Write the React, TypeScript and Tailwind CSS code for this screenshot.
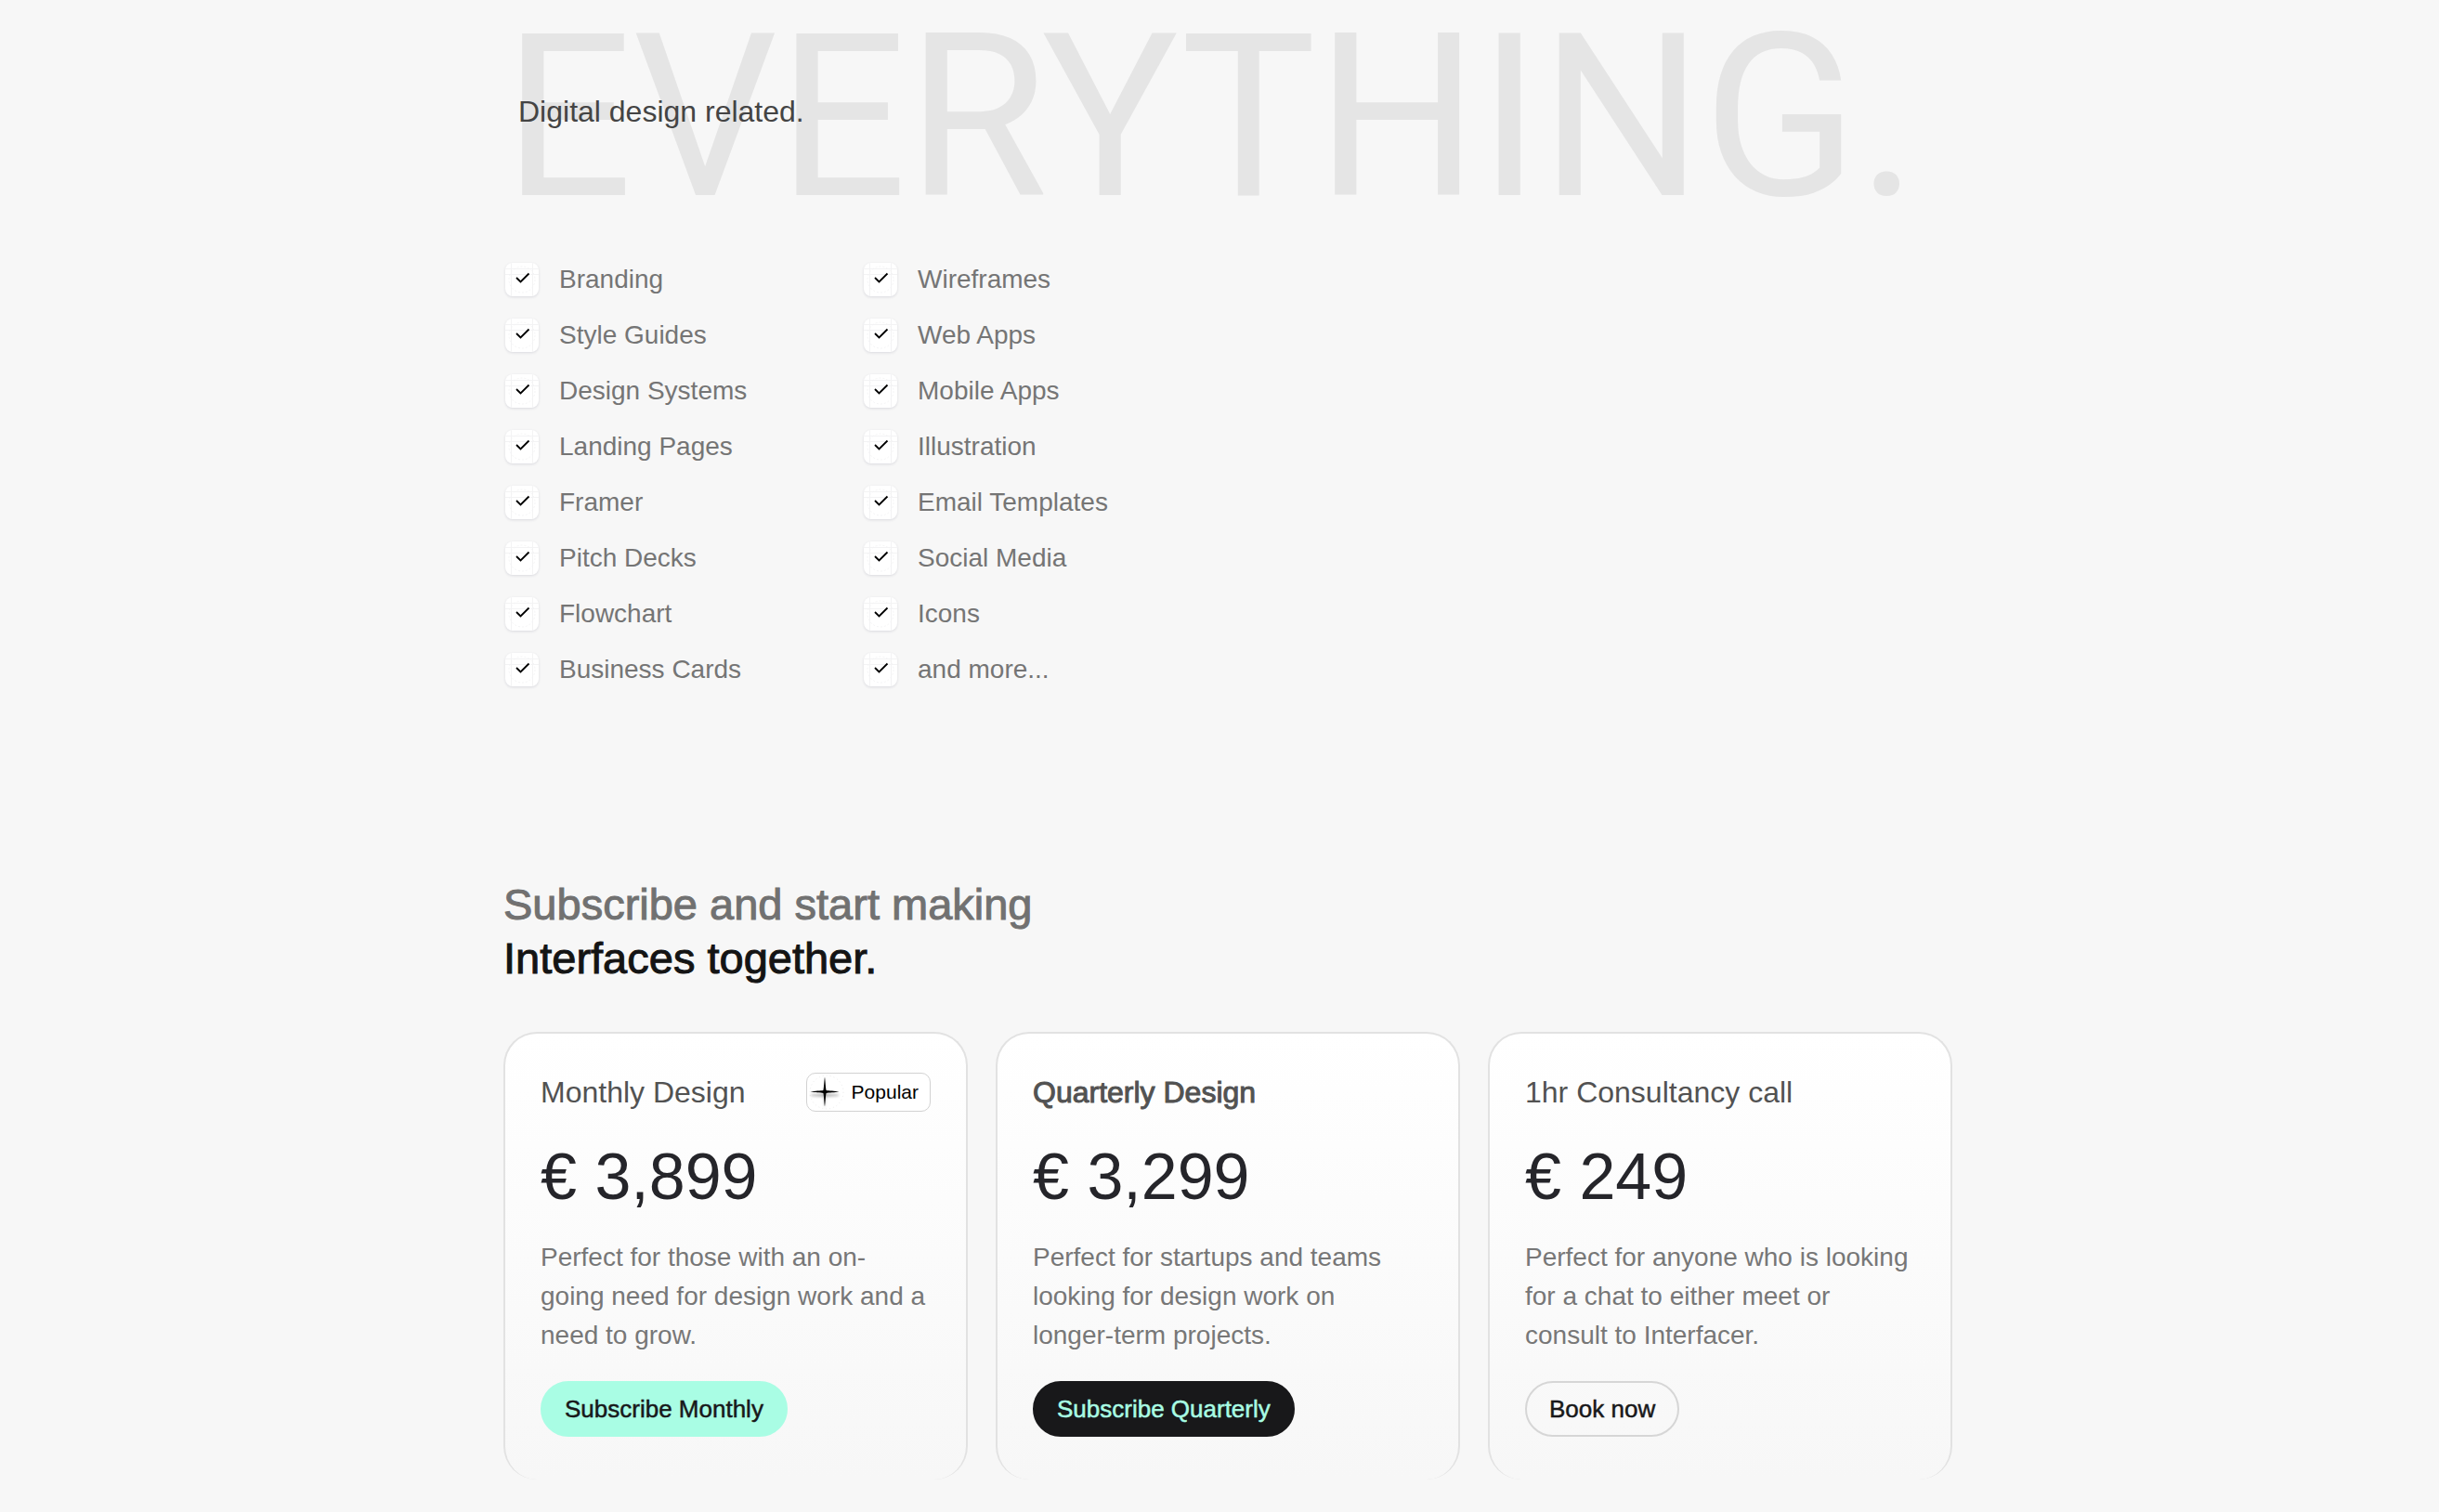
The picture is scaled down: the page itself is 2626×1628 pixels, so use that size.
const services = [
  "Branding",
  "Style Guides",
  "Design Systems",
  "Landing Pages",
  "Framer",
  "Pitch Decks",
  "Flowchart",
  "Business Cards",
  "Wireframes",
  "Web Apps",
  "Mobile Apps",
  "Illustration",
  "Email Templates",
  "Social Media",
  "Icons",
  "and more...",
];

const plans = [
  {
    name: "Monthly Design",
    nameClass: "",
    price: "€ 3,899",
    text: "Perfect for those with an on-\ngoing need for design work and a need to grow.",
    action: "Subscribe Monthly",
    actionClass: "border-[#a9fde4] bg-[#a9fde4] text-[#18181a]",
    popular: true,
  },
  {
    name: "Quarterly Design",
    nameClass: "[-webkit-text-stroke:1px]",
    price: "€ 3,299",
    text: "Perfect for startups and teams looking for design work on longer-term projects.",
    action: "Subscribe Quarterly",
    actionClass: "border-[#18181a] bg-[#18181a] text-[#a9fde4]",
    popular: false,
  },
  {
    name: "1hr Consultancy call",
    nameClass: "",
    price: "€ 249",
    text: "Perfect for anyone who is looking for a chat to either meet or consult to Interfacer.",
    action: "Book now",
    actionClass: "border-[#d6d6d6] bg-transparent text-[#18181a]",
    popular: false,
  },
];

function CheckTile() {
  return (
    <svg
      viewBox="0 0 36 36"
      className="size-9 shrink-0 rounded-lg bg-white shadow-[0_1px_3px_rgba(40,40,80,0.14)]"
      fill="none"
      aria-hidden="true"
    >
      <g stroke="#f3f3f4">
        <path d="M6.5 0V36M29.5 0V36M0 6.5H36M0 12.5H36" />
        <circle cx="18" cy="18" r="14" strokeDasharray="2 2" />
      </g>
      <path d="M12 16L16.500 20.500L25.500 11.500" stroke="#000" strokeWidth="1.8" />
    </svg>
  );
}

function Spark() {
  return (
    <svg viewBox="0 0 40 40" className="size-10 shrink-0" aria-hidden="true">
      <defs>
        <filter id="spark-shadow" x="-20%" y="-20%" width="140%" height="160%">
          <feGaussianBlur stdDeviation="1.4" />
        </filter>
      </defs>
      <circle cx="21" cy="20" r="18" fill="none" stroke="#ececec" strokeDasharray="1 3" />
      <path
        d="M19 7L20 21.500L34 22.500L34 24L20 25L19 38L18 25L4 24L4 22.500L18 21.500Z"
        fill="#000"
        opacity="0.3"
        filter="url(#spark-shadow)"
      />
      <path
        d="M19 3.500C19.800 9 19.900 16 20.600 18.100C23 18.600 30 18.700 34.500 19.500C30 20.300 23 20.400 20.600 20.900C19.900 23 19.800 30 19 35.500C18.200 30 18.100 23 17.400 20.900C15 20.400 8 20.300 3.500 19.500C8 18.700 15 18.600 17.400 18.100C18.100 16 18.200 9 19 3.500Z"
        fill="#000"
      />
    </svg>
  );
}

export default function App() {
  return (
    <main className="min-h-screen bg-[#f7f7f7] pl-[18px] font-['Liberation_Sans',Arial,sans-serif]">
      <div className="mx-auto max-w-[1560px] pb-9">
        <section id="services">
          <div className="relative">
            <h1 className="whitespace-nowrap font-[Roboto,sans-serif] text-[245px] leading-[254px] text-[#e5e5e5]">
              EVERYTHING.
            </h1>
            <p className="absolute top-24 left-4 text-[32px] leading-12 text-[#444]">
              Digital design related.
            </p>
          </div>

          <ul className="mt-[17px] grid w-[772px] grid-flow-col grid-cols-2 grid-rows-8">
            {services.map((service) => (
              <li key={service} className="flex h-[60px] items-center gap-[22px] pl-0.5">
                <CheckTile />
                <span className="text-[28px] leading-[42px] text-[#757575]">{service}</span>
              </li>
            ))}
          </ul>
        </section>

        <section id="pricing" className="pt-[194px]">
          <h2 className="text-[47px] leading-[58px] text-[#141414] [-webkit-text-stroke:1px]">
            <span className="block text-[#717171]">Subscribe and start making</span>
            Interfaces together.
          </h2>

          <div className="mt-[50px] grid grid-cols-3 gap-[30px]">
            {plans.map((plan) => (
              <article
                key={plan.name}
                className="rounded-[36px] border-2 border-b-0 border-[#e2e2e2] bg-linear-to-b from-white to-[#f7f7f7] px-[38px] pt-[42px] pb-[46px]"
              >
                <div className="flex h-[42px] items-center justify-between">
                  <h3 className={`text-[32px] leading-[42px] text-[#525252] ${plan.nameClass}`}>
                    {plan.name}
                  </h3>
                  {plan.popular && (
                    <span className="flex h-[42px] items-center gap-2 rounded-[10px] border border-[#d2d2d2] bg-white pr-3 text-[21px] text-black">
                      <Spark />
                      Popular
                    </span>
                  )}
                </div>

                <p className="mt-[30px] text-[70px] leading-20 text-[#25252a]">{plan.price}</p>

                <p className="mt-[26px] whitespace-pre-line text-[28px] leading-[42px] text-[#777]">
                  {plan.text}
                </p>

                <button
                  type="button"
                  className={`mt-7 flex h-[60px] items-center rounded-full border-2 px-6 text-[26px] [-webkit-text-stroke:0.5px] ${plan.actionClass}`}
                >
                  {plan.action}
                </button>
              </article>
            ))}
          </div>
        </section>
      </div>
    </main>
  );
}
